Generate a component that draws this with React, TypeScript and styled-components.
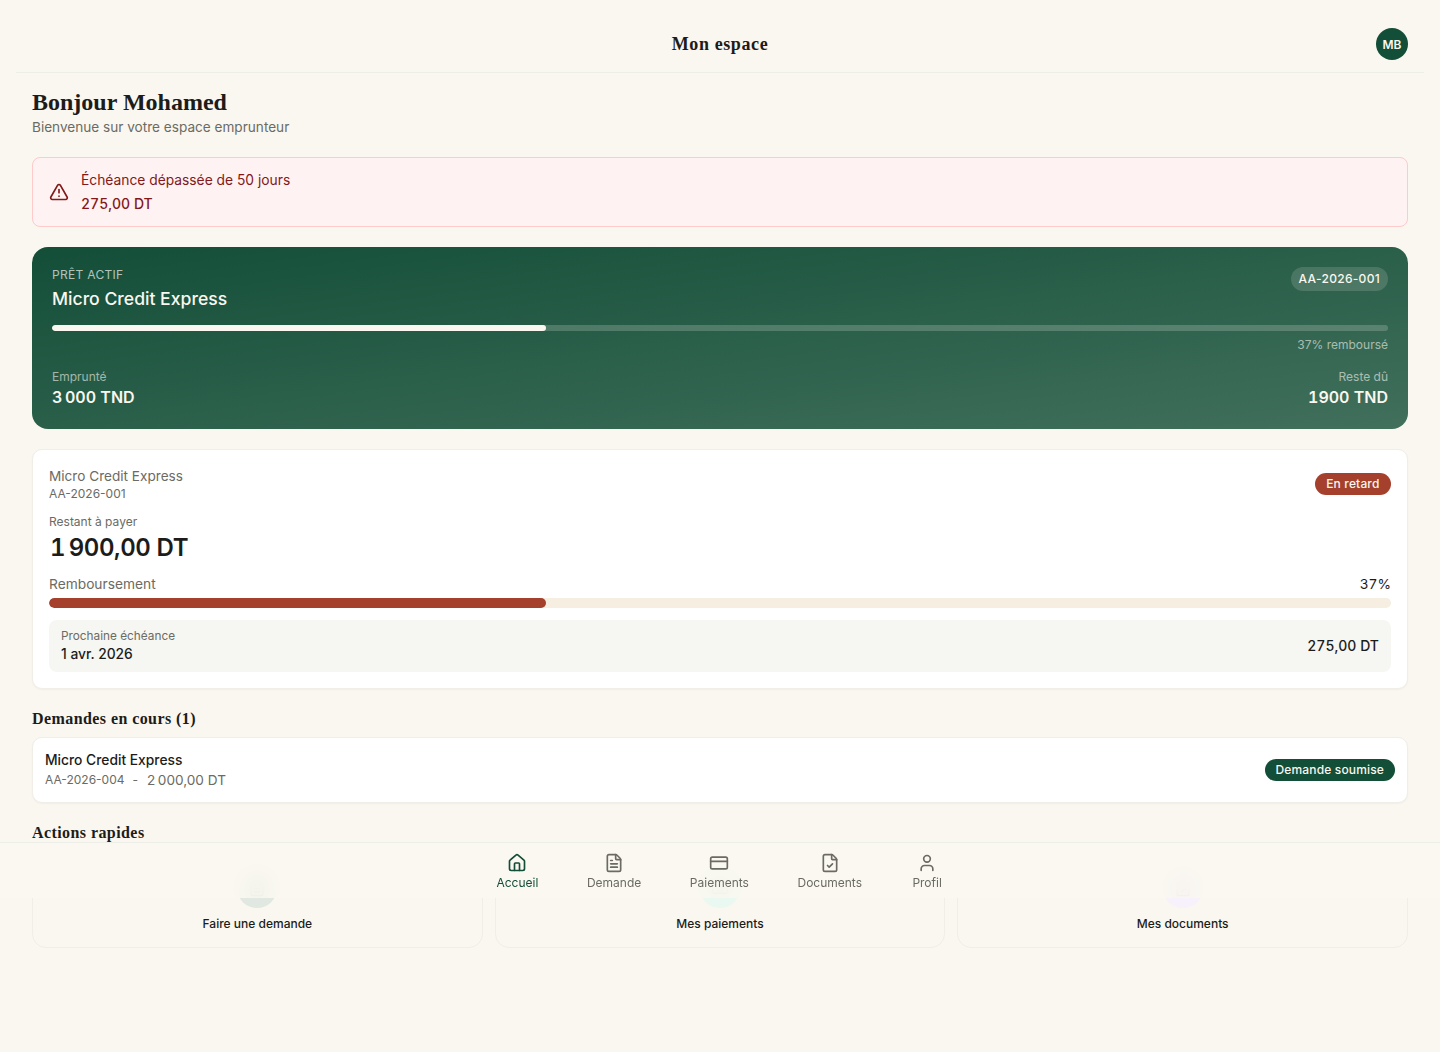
import React from "react"
import styled, { createGlobalStyle } from "styled-components"
import { CreditCard, FileCheck, FileText, House, TriangleAlert, User } from "lucide-react"

const serif = `"Liberation Serif", Georgia, serif`

const GlobalStyle = createGlobalStyle`
  html, body {
    margin: 0;
    padding: 0;
    background: #faf7f0;
    color: #1c1c1a;
    font-family: Inter, "Liberation Sans", sans-serif;
  }
  * { box-sizing: border-box; }
`

const Page = styled.div`
  min-height: 1052px;
`

const Header = styled.header`
  position: relative;
  margin: 0 16px;
  height: 73px;
  padding: 28px 16px 12px;
  display: flex;
  align-items: center;
  justify-content: flex-end;
  border-bottom: 1px solid #eceee7;
`

const HeaderTitle = styled.h1`
  position: absolute;
  left: 0;
  right: 0;
  top: 33px;
  margin: 0;
  text-align: center;
  font: 700 18px/22px ${serif};
  letter-spacing: 0.6px;
  color: #1c1c1a;
`

const Avatar = styled.div`
  width: 32px;
  height: 32px;
  border-radius: 50%;
  background: #134e38;
  color: #faf7f0;
  display: flex;
  align-items: center;
  justify-content: center;
  font-size: 12px;
  font-weight: 600;
`

const Main = styled.main`
  padding: 15px 32px 0;
  display: flex;
  flex-direction: column;
`

const Greeting = styled.h2`
  margin: 0;
  font: 700 24px/28px ${serif};
  color: #1c1c1a;
`

const Welcome = styled.p`
  margin: 1px 0 20px;
  font-size: 13.6px;
  line-height: 20px;
  color: #6b6b63;
`

const Alert = styled.div`
  height: 70px;
  padding: 0 16px;
  display: flex;
  align-items: center;
  gap: 12px;
  background: #fef2f2;
  border: 1px solid #fecaca;
  border-radius: 8px;
  color: #82181a;
  font-size: 13.8px;
  line-height: 23px;
  margin-bottom: 20px;
`

const AlertText = styled.div`
  margin-top: -1px;
`

const AlertAmount = styled.div`
  font-size: 14px;
  font-weight: 500;
  font-variant-numeric: tabular-nums;
`

const Hero = styled.section`
  height: 182px;
  padding: 20px;
  border-radius: 16px;
  background: linear-gradient(to bottom right, #134e38 0%, #41705c 100%);
  color: #faf7f0;
  margin-bottom: 20px;
`

const HeroTop = styled.div`
  display: flex;
  justify-content: space-between;
  align-items: flex-start;
`

const HeroLabel = styled.div`
  font-size: 12px;
  line-height: 16px;
  letter-spacing: 0.3px;
  color: rgba(250, 247, 240, 0.7);
`

const HeroName = styled.div`
  margin-top: 4px;
  font-size: 17.6px;
  line-height: 24px;
  font-weight: 500;
`

const RefPill = styled.span`
  padding: 3px 8px;
  height: 24px;
  border-radius: 999px;
  background: rgba(250, 247, 240, 0.15);
  font-size: 12px;
  line-height: 18px;
  font-weight: 500;
  letter-spacing: 0.3px;
`

const HeroTrack = styled.div`
  margin-top: 14px;
  height: 6px;
  border-radius: 999px;
  background: rgba(250, 247, 240, 0.2);
  overflow: hidden;
`

const HeroFill = styled.div`
  height: 100%;
  border-radius: 999px;
  background: #faf7f0;
`

const HeroPercent = styled.div`
  margin-top: 6px;
  text-align: right;
  font-size: 12px;
  line-height: 16px;
  color: rgba(250, 247, 240, 0.6);
`

const HeroStats = styled.div`
  margin-top: 16px;
  display: flex;
  justify-content: space-between;
`

const Stat = styled.div<{ $end?: boolean }>`
  text-align: ${(p) => (p.$end ? "right" : "left")};
`

const StatLabel = styled.div`
  font-size: 12px;
  line-height: 16px;
  color: rgba(250, 247, 240, 0.6);
`

const StatValue = styled.div`
  font-size: 16px;
  line-height: 24px;
  font-weight: 600;
  font-variant-numeric: tabular-nums;
`

const Card = styled.section`
  background: #fff;
  border: 1px solid #f0eee6;
  border-radius: 10px;
  box-shadow: 0 1px 2px rgba(28, 28, 26, 0.04);
`

const LoanCard = styled(Card)`
  height: 240px;
  padding: 16px;
`

const LoanTop = styled.div`
  display: flex;
  justify-content: space-between;
  align-items: flex-start;
`

const LoanName = styled.div`
  font-size: 13.6px;
  line-height: 20px;
  color: #6b6b63;
`

const LoanRef = styled.div`
  font-size: 12px;
  line-height: 16px;
  color: #6b6b63;
`

const Badge = styled.span<{ $tone: "late" | "green" }>`
  display: inline-block;
  height: 22px;
  padding: 0 ${(p) => (p.$tone === "late" ? "11.5px" : "11px")};
  border-radius: 999px;
  background: ${(p) => (p.$tone === "late" ? "#a5402d" : "#134e38")};
  color: #faf7f0;
  font-size: 12px;
  line-height: 22px;
  font-weight: 500;
  letter-spacing: 0.15px;
  white-space: nowrap;
`

const LateBadge = styled(Badge)`
  margin-top: 7px;
`

const RemainingLabel = styled.div`
  margin-top: 12px;
  font-size: 12px;
  line-height: 16px;
  color: #6b6b63;
`

const RemainingValue = styled.div`
  margin-top: 2px;
  font-size: 24px;
  line-height: 32px;
  font-weight: 600;
  letter-spacing: -0.4px;
  font-variant-numeric: tabular-nums;
  padding-left: 1px;
  color: #1c1c1a;
`

const ProgressHead = styled.div`
  margin-top: 10px;
  display: flex;
  justify-content: space-between;
  font-size: 13.75px;
  line-height: 20px;
  color: #6b6b63;
`

const ProgressValue = styled.span`
  color: #1c1c1a;
  font-variant-numeric: tabular-nums;
`

const Track = styled.div`
  margin-top: 4px;
  height: 10px;
  border-radius: 999px;
  background: #f5eee1;
  overflow: hidden;
`

const Fill = styled.div`
  height: 100%;
  border-radius: 999px;
  background: #a5402d;
`

const NextDue = styled.div`
  margin-top: 12px;
  height: 52px;
  padding: 0 12px;
  display: flex;
  justify-content: space-between;
  align-items: center;
  background: #f6f6f2;
  border-radius: 8px;
`

const NextLabel = styled.div`
  font-size: 11.8px;
  line-height: 16px;
  color: #6b6b63;
`

const NextDate = styled.div`
  font-size: 13.8px;
  line-height: 20px;
  font-weight: 500;
`

const NextAmount = styled.div`
  margin-top: -2px;
  font-size: 14px;
  font-weight: 500;
  font-variant-numeric: tabular-nums;
`

const SectionTitle = styled.h3`
  margin: 20px 0 8px;
  font: 700 16px/20px ${serif};
  letter-spacing: 0.42px;
  color: #1c1c1a;
`

const RequestCard = styled(Card)`
  height: 66px;
  padding: 0 12px;
  display: flex;
  justify-content: space-between;
  align-items: center;
`

const RequestInfo = styled.div`
  margin-top: -2px;
`

const RequestName = styled.div`
  font-size: 13.8px;
  line-height: 20px;
  font-weight: 500;
`

const RequestMeta = styled.div`
  margin-top: 1px;
  display: flex;
  gap: 8px;
  font-size: 12px;
  line-height: 18px;
  color: #6b6b63;
`

const RequestAmount = styled.span`
  margin-left: 1px;
  font-size: 13.6px;
`

const ActionsTitle = styled(SectionTitle)`
  margin: 20px 0 9px;
`

const ActionGrid = styled.div`
  display: grid;
  grid-template-columns: repeat(3, 1fr);
  gap: 12px;
`

const ActionCard = styled.div`
  height: 96px;
  padding: 15px 16px;
  display: flex;
  flex-direction: column;
  align-items: center;
  gap: 7px;
  border: 1px solid #f0eee6;
  border-radius: 14px;
  font-size: 12px;
  line-height: 18px;
  font-weight: 500;
`

const ActionIcon = styled.div<{ $bg: string; $fg: string }>`
  flex: none;
  width: 40px;
  height: 40px;
  border-radius: 50%;
  background: ${(p) => p.$bg};
  color: ${(p) => p.$fg};
  display: flex;
  align-items: center;
  justify-content: center;
`

const BottomNav = styled.nav`
  position: fixed;
  top: 842px;
  left: 0;
  right: 0;
  height: 56px;
  display: flex;
  justify-content: center;
  gap: 48.6px;
  padding-top: 10px;
  background: rgba(250, 247, 240, 0.93);
  backdrop-filter: blur(8px);
  border-top: 1px solid #eceee7;
`

const NavItem = styled.a<{ $active?: boolean }>`
  min-width: 33px;
  display: flex;
  flex-direction: column;
  align-items: center;
  gap: 2px;
  font-size: 12px;
  line-height: 16px;
  color: ${(p) => (p.$active ? "#134e38" : "#6b6b63")};
`

const navItems = [
  { label: "Accueil", icon: House, active: true },
  { label: "Demande", icon: FileText },
  { label: "Paiements", icon: CreditCard },
  { label: "Documents", icon: FileCheck },
  { label: "Profil", icon: User },
]

const actions = [
  { label: "Faire une demande", icon: FileText, bg: "#e1e8e2", fg: "#134e38" },
  { label: "Mes paiements", icon: CreditCard, bg: "#e9f9f1", fg: "#047857" },
  { label: "Mes documents", icon: FileCheck, bg: "#f6f1fb", fg: "#6d28d9" },
]

const App = () => {
  return (
    <Page>
      <GlobalStyle />
      <Header>
        <HeaderTitle>Mon espace</HeaderTitle>
        <Avatar>MB</Avatar>
      </Header>

      <Main>
        <Greeting>Bonjour Mohamed</Greeting>
        <Welcome>Bienvenue sur votre espace emprunteur</Welcome>

        <Alert>
          <TriangleAlert size={20} strokeWidth={2} />
          <AlertText>
            <div>Échéance dépassée de 50 jours</div>
            <AlertAmount>275,00 DT</AlertAmount>
          </AlertText>
        </Alert>

        <Hero>
          <HeroTop>
            <div>
              <HeroLabel>PRÊT ACTIF</HeroLabel>
              <HeroName>Micro Credit Express</HeroName>
            </div>
            <RefPill>AA-2026-001</RefPill>
          </HeroTop>
          <HeroTrack>
            <HeroFill style={{ width: "37%" }} />
          </HeroTrack>
          <HeroPercent>37% remboursé</HeroPercent>
          <HeroStats>
            <Stat>
              <StatLabel>Emprunté</StatLabel>
              <StatValue>3{"\u202f"}000 TND</StatValue>
            </Stat>
            <Stat $end>
              <StatLabel>Reste dû</StatLabel>
              <StatValue>1900 TND</StatValue>
            </Stat>
          </HeroStats>
        </Hero>

        <LoanCard>
          <LoanTop>
            <div>
              <LoanName>Micro Credit Express</LoanName>
              <LoanRef>AA-2026-001</LoanRef>
            </div>
            <LateBadge $tone="late">En retard</LateBadge>
          </LoanTop>
          <RemainingLabel>Restant à payer</RemainingLabel>
          <RemainingValue>1{"\u202f"}900,00 DT</RemainingValue>
          <ProgressHead>
            <span>Remboursement</span>
            <ProgressValue>37%</ProgressValue>
          </ProgressHead>
          <Track>
            <Fill style={{ width: "37%" }} />
          </Track>
          <NextDue>
            <div>
              <NextLabel>Prochaine échéance</NextLabel>
              <NextDate>1 avr. 2026</NextDate>
            </div>
            <NextAmount>275,00 DT</NextAmount>
          </NextDue>
        </LoanCard>

        <SectionTitle>Demandes en cours (1)</SectionTitle>
        <RequestCard>
          <RequestInfo>
            <RequestName>Micro Credit Express</RequestName>
            <RequestMeta>
              <span>AA-2026-004</span>
              <span>-</span>
              <RequestAmount>2{"\u202f"}000,00 DT</RequestAmount>
            </RequestMeta>
          </RequestInfo>
          <Badge $tone="green">Demande soumise</Badge>
        </RequestCard>

        <ActionsTitle>Actions rapides</ActionsTitle>
        <ActionGrid>
          {actions.map((a) => (
            <ActionCard key={a.label}>
              <ActionIcon $bg={a.bg} $fg={a.fg}>
                <a.icon size={18} />
              </ActionIcon>
              {a.label}
            </ActionCard>
          ))}
        </ActionGrid>
      </Main>

      <BottomNav>
        {navItems.map((item) => (
          <NavItem key={item.label} $active={item.active}>
            <item.icon size={20} strokeWidth={2} />
            {item.label}
          </NavItem>
        ))}
      </BottomNav>
    </Page>
  )
}

export default App
